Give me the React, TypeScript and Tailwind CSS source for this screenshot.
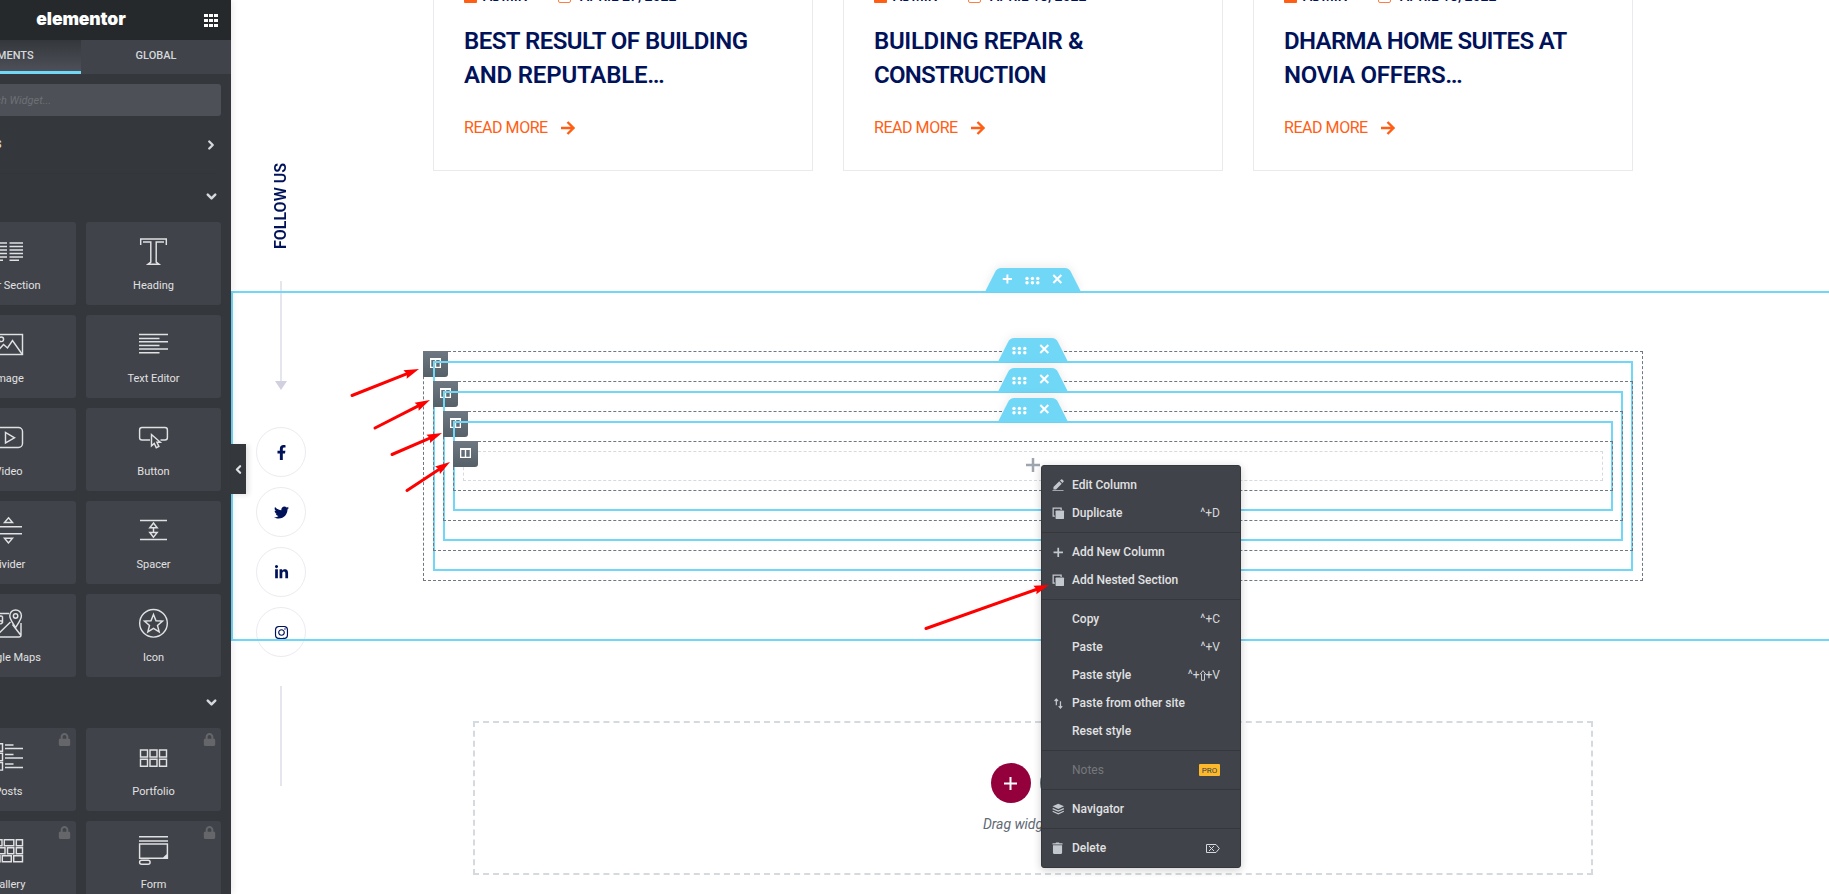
import React from 'react';
import { FaFacebookF, FaTwitter, FaLinkedinIn, FaInstagram, FaLock } from 'react-icons/fa';
import { ChevronDown, ChevronLeft, ChevronRight } from 'lucide-react';

type Widget = { label: string; locked?: boolean; art: React.ReactNode };

const basicWidgets: Widget[] = [
  {
    label: 'Inner Section',
    art: <path d="M0 5.9h13M0 9.4h13M0 12.9h13M0 16.4h13M0 19.9h13M0 23.2h9M15.500 5.9h13.500M15.500 9.4h13.500M15.500 12.9h13.500M15.500 16.4h13.500M15.500 19.9h13.500M15.500 23.2h9.500" />,
  },
  {
    label: 'Heading',
    art: <path d="M1.7 8V2h25.6v6M4 5h7.800v20.2L9 27.300h11l-2.800-2.100V5H25" />,
  },
  {
    label: 'Image',
    art: (
      <>
        <rect x="0.5" y="4.5" width="28" height="20" />
        <circle cx="7.3" cy="9.3" r="2.3" />
        <path d="M1 24l8.5-9.5 4 3.5 5-7.5L28 24" />
      </>
    ),
  },
  { label: 'Text Editor', art: <path d="M0 4.5h29M0 8.5h20.5M0 11.8h29M0 15.5h20.5M0 19h29M0 22.7h20.5" /> },
  {
    label: 'Video',
    art: (
      <>
        <rect x="0.5" y="4.5" width="28" height="20" rx="4" />
        <path d="M11.5 9.5v10.5l9-5.2z" />
      </>
    ),
  },
  {
    label: 'Button',
    art: (
      <>
        <path d="M11 17H3Q0.6 17 0.6 14.500V7Q0.6 4.500 3 4.500h23Q28.400 4.500 28.400 7v7.500Q28.400 17 26 17h-4.500" />
        <path d="M12.500 11.500v11.300l2.800-2.400 2 4.300 2.600-1.200-2-4.200h3.400z" />
      </>
    ),
  },
  { label: 'Divider', art: <path d="M1 10.700h27M1 17.700h27M14.500 1.800l4 4.700h-8zM14.500 27l-4-4.700h8z" /> },
  { label: 'Spacer', art: <path d="M1 4.500h27M1 23.500h27M14.500 7l3.700 4.700h-7.400zM14.500 21.200l-3.700-4.700h7.400zM14.500 11.700v4.800" /> },
  {
    label: 'Google Maps',
    art: (
      <>
        <path d="M15 4.500H3Q1 4.500 1 6.500v19.500Q1 28 3 28h22Q27 28 27 26V14M1.500 27.500L16.500 13M18.500 15.500L27 26.500" />
        <path d="M21.600 18.500C19 14 15.800 10.500 15.800 6.700a5.800 5.800 0 0 1 11.600 0C27.400 10.500 24.200 14 21.600 18.500z" />
        <circle cx="21.600" cy="7" r="2.200" />
        <path d="M8.500 7.500a2.500 2.500 0 1 0 .4 3.500M8.500 7.500v6q-2 2.500-4 .5" />
      </>
    ),
  },
  {
    label: 'Icon',
    art: (
      <>
        <circle cx="14.500" cy="14.300" r="13.800" />
        <path d="M14.500 5.500l2.500 6.200 6.500.4-5 4.300 1.700 6.500-5.700-3.600-5.700 3.600 1.700-6.500-5-4.300 6.500-.4z" />
      </>
    ),
  },
];

const proWidgets: Widget[] = [
  {
    label: 'Posts',
    locked: true,
    art: (
      <>
        <path d="M1 .8h7.500v7.500H1zM1 10.300h7.500v7.500H1zM1 19.600h7.500v7.500H1z" />
        <path d="M11 2h8.500M11 5.500h18M11 11.500h8.500M11 15h18M11 21h8.500M11 24.500h18" />
      </>
    ),
  },
  {
    label: 'Portfolio',
    locked: true,
    art: <path d="M1.500 7h7v7h-7zM11 7h7v7h-7zM20.500 7h7v7h-7zM1.500 16.300h7v7h-7zM11 16.300h7v7h-7zM20.500 16.300h7v7h-7z" />,
  },
  {
    label: 'Gallery',
    locked: true,
    art: (
      <path d="M1 3.800h7v6H1zM10.300 3.800h9.500v6h-9.500zM22.300 3.800h6.200v6h-6.200zM1 11.800h10v6H1zM13.500 11.800h6.300v6h-6.300zM22.300 11.800h6.200v6h-6.200zM1 19.800h5v6H1zM8.300 19.800h9v6h-9zM19.700 19.800h8.800v6h-8.800z" />
    ),
  },
  {
    label: 'Form',
    locked: true,
    art: (
      <>
        <path d="M0 .8h29M0 5h29" />
        <path d="M.6 8h27.800v14.300H.6zM24.500 22l3.800-3.500M26.300 22l2-2" />
        <rect x="0.600" y="24.300" width="10.500" height="4" rx="2" />
      </>
    ),
  },
];

function WidgetCard({ label, locked, art }: Widget) {
  return (
    <div className="relative flex h-[83px] flex-col items-center rounded-[3px] bg-[#404349] pt-[15px]">
      {locked && <FaLock className="absolute right-[5px] top-[5px] h-[13px] w-[13px] text-[#64666a]" />}
      <svg width="29" height="29" viewBox="0 0 29 29" fill="none" stroke="#e0e1e3" strokeWidth="1.450" className="overflow-visible">
        {art}
      </svg>
      <span className="mt-[12px] whitespace-nowrap text-[11px] leading-[16px] text-[#e0e1e3]">{label}</span>
    </div>
  );
}

function Sidebar() {
  return (
    <aside className="relative z-20 h-full w-[231px] shrink-0 bg-[#34383c] shadow-[0_0_8px_rgba(0,0,0,0.12)]">
      <div className="flex h-full justify-end overflow-hidden">
        <div className="w-[300px] shrink-0">
          <header className="grid h-[40px] grid-cols-[50px_200px_50px] items-center bg-[#26292c]">
            <span />
            <span className="pb-[3px] text-center font-['Inter'] text-[17.500px] font-black leading-[20px] tracking-[-0.1px] text-white">elementor</span>
            <svg width="14" height="13" viewBox="0 0 14 13" fill="#fff" className="ml-[23px]">
              <path d="M0 0h4v3H0zM5 0h4v3H5zM10 0h4v3h-4zM0 5h4v3H0zM5 5h4v3H5zM10 5h4v3h-4zM0 10h4v3H0zM5 10h4v3H5zM10 10h4v3h-4z" />
            </svg>
          </header>
          <nav className="grid h-[34px] grid-cols-2 text-center text-[11px] font-medium leading-[31px] text-[#d5d8dc]">
            <span className="border-b-[3px] border-[#71d7f7] bg-linear-to-b from-[#34383c] to-[#4d5058]">ELEMENTS</span>
            <span className="bg-[#404349]">GLOBAL</span>
          </nav>
          <div className="px-[10px] pt-[10px]">
            <div className="h-[32px] rounded-[3px] bg-[#4d5057] pl-[33px] text-[11px] italic leading-[33px] text-[#6d7075]">Search Widget...</div>
          </div>
          <div className="mx-[15px] flex h-[58px] items-center justify-between border-b border-[#323539] text-[11px] font-bold text-[#d5d8dc]">
            <span className="-ml-px pt-[2px]">FAVORITES</span>
            <ChevronRight className="-mr-[2px] h-[14px] w-[14px]" strokeWidth={4} />
          </div>
          <div className="mx-[12px] mb-[4px] flex h-[44px] items-center justify-end text-[#d5d8dc]">
            <ChevronDown className="h-[15px] w-[15px]" strokeWidth={4} />
          </div>
          <div className="grid grid-cols-2 gap-[10px] px-[10px]">
            {basicWidgets.map((w) => (
              <WidgetCard key={w.label} {...w} />
            ))}
          </div>
          <div className="mx-[12px] flex h-[51px] items-center justify-end text-[#d5d8dc]">
            <ChevronDown className="h-[15px] w-[15px]" strokeWidth={4} />
          </div>
          <div className="grid grid-cols-2 gap-[10px] px-[10px]">
            {proWidgets.map((w) => (
              <WidgetCard key={w.label} {...w} />
            ))}
          </div>
        </div>
      </div>
      <button className="absolute left-full top-[444px] flex h-[50px] w-[15px] items-center justify-center bg-[#34383c] text-[#e0e1e3] shadow-[3px_1px_5px_rgba(0,0,0,0.1)]">
        <ChevronLeft className="h-[13px] w-[13px] shrink-0" strokeWidth={4} />
      </button>
    </aside>
  );
}

type Post = { date: string; lines: { text: string; style: string }[] };

const posts: Post[] = [
  {
    date: 'APRIL 27, 2022',
    lines: [
      { text: 'BEST RESULT OF BUILDING', style: 'tracking-[-0.520px]' },
      { text: 'AND REPUTABLE…', style: 'tracking-[-0.200px]' },
    ],
  },
  {
    date: 'APRIL 18, 2022',
    lines: [
      { text: 'BUILDING REPAIR &', style: 'tracking-[-0.320px]' },
      { text: 'CONSTRUCTION', style: 'tracking-[-0.700px]' },
    ],
  },
  {
    date: 'APRIL 18, 2022',
    lines: [
      { text: 'DHARMA HOME SUITES AT', style: 'tracking-[-0.660px]' },
      { text: 'NOVIA OFFERS…', style: 'tracking-[-0.250px]' },
    ],
  },
];

function PostCard({ date, lines }: Post) {
  return (
    <article className="flex h-[171px] w-[380px] flex-col border border-t-0 border-[#e9e9ee] pl-[30px]">
      <div className="-mt-[12px] flex h-[16px] items-center text-[14px] font-medium leading-[16px] text-[#00125a]">
        <span className="mr-[6px] h-[14px] w-[13px] rounded-[1px] bg-[#ff5e14]" />
        <span className="w-[75px]">ADMIN</span>
        <span className="mr-[9px] h-[14px] w-[13px] rounded-[2px] border-[1.500px] border-[#ff7d42]" />
        <span className="whitespace-nowrap">{date}</span>
      </div>
      <h3 className="mt-[20px] font-['Roboto'] text-[24px] font-semibold leading-[34px] text-[#00125a]">
        {lines.map((l) => (
          <span key={l.text} className={'block whitespace-nowrap ' + l.style}>
            {l.text}
          </span>
        ))}
      </h3>
      <a className="mt-[26px] flex items-center text-[16px] leading-[20px] text-[#ff5e14]">
        <span className="w-[97px] tracking-[-0.450px]">READ MORE</span>
        <svg width="14" height="14" viewBox="0 0 14 14" fill="none" stroke="#ff5e14" strokeWidth="2.400">
          <path d="M0 7h12M6.500 1l6 6-6 6" />
        </svg>
      </a>
    </article>
  );
}

function Tab({ withAdd }: { withAdd?: boolean }) {
  return (
    <div className="absolute -top-[23px] left-0 flex w-full justify-center">
      <div
        className={
          "relative flex h-[24px] before:absolute before:inset-y-0 before:left-0 before:w-2/3 before:-skew-x-[27deg] before:rounded-tl-[4px] before:bg-[#71d7f7] before:content-[''] after:absolute after:inset-y-0 after:right-0 after:w-2/3 after:skew-x-[27deg] after:rounded-tr-[4px] after:bg-[#71d7f7] after:content-[''] drop-shadow-[0_-2px_4px_rgba(0,0,0,0.07)] " +
          (withAdd ? 'w-[84px]' : 'w-[59px]')
        }
      >
        <div className={withAdd ? 'relative z-10 flex w-full items-center justify-center pr-[2px]' : 'relative z-10 flex w-full items-center justify-center pr-[2px]'}>
          {withAdd && (
            <svg width="25" height="24" viewBox="0 0 25 24" stroke="#fff" strokeWidth="1.900">
              <path d="M7.800 11h9.200M12.400 6.400v9.200" />
            </svg>
          )}
          <svg width="25" height="24" viewBox="0 0 25 24" fill="#fff">
            {[7, 12.400, 17.800].map((x) => (
              <React.Fragment key={x}>
                <circle cx={x} cy="10.400" r="1.700" />
                <circle cx={x} cy="14.800" r="1.700" />
              </React.Fragment>
            ))}
          </svg>
          <svg width="25" height="24" viewBox="0 0 25 24" stroke="#fff" strokeWidth="2">
            <path d="M8.300 7l8 8M16.300 7l-8 8" />
          </svg>
        </div>
      </div>
    </div>
  );
}

function Column({ children }: { children: React.ReactNode }) {
  return (
    <div className="relative p-[10px]">
      <div className="pointer-events-none absolute inset-0 border border-dashed border-[#6d7882]" />
      <div className="absolute left-0 top-0 flex h-[26px] w-[25px] rounded-br-[3px] bg-linear-to-b from-[#6d7882] to-[#556068] pl-[7px] pt-[7px]">
        <svg width="11" height="10" viewBox="0 0 11 10" fill="#fff">
          <path d="M0 0h11v10H0zM1.300 2v6.700h3.500V2zM6.200 2v6.700h3.500V2z" fillRule="evenodd" />
        </svg>
      </div>
      {children}
    </div>
  );
}

function InnerSection({ children }: { children: React.ReactNode }) {
  return (
    <div className="relative py-[20px]">
      <div className="pointer-events-none absolute inset-0 border-2 border-[#71d7f7]" />
      <Tab />
      {children}
    </div>
  );
}

function FollowBar() {
  return (
    <div className="absolute left-[25px] top-[163px] flex w-[50px] flex-col items-center">
      <span className="h-[87px] rotate-180 text-center text-[16px] font-semibold leading-[20px] text-[#00125a] [writing-mode:vertical-rl]">FOLLOW US</span>
      <span className="mt-[31px] h-[100px] w-[2px] bg-[#e5e5ed]" />
      <span className="h-[9px] w-[12px] bg-[#d0d0df] [clip-path:polygon(0_0,100%_0,50%_100%)]" />
      <div className="mt-[37px] flex flex-col gap-[10px] text-[#00125a]">
        {[FaFacebookF, FaTwitter, FaLinkedinIn, FaInstagram].map((Icon, i) => (
          <span key={i} className="flex h-[50px] w-[50px] items-center justify-center rounded-full border border-[#ebebf1]">
            <Icon className="h-[15px] w-[15px]" />
          </span>
        ))}
      </div>
      <span className="mt-[29px] h-[100px] w-[2px] bg-[#e5e5ed]" />
    </div>
  );
}

type Entry = { label: string; icon?: React.ReactNode; keys?: React.ReactNode; pro?: boolean };

const duplicate = (
  <>
    <path d="M3 9.500H1.200V1.200H9.500V3" fill="none" stroke="#c2c8ce" strokeWidth="1.300" />
    <rect x="3.700" y="3.700" width="8.800" height="8.800" rx="0.800" />
  </>
);

const menu: Entry[][] = [
  [
    {
      label: 'Edit Column',
      icon: (
        <>
          <path d="M1.500 11V8.300L7.500 2.300l2.600 2.600L4.200 11zM8.300 1.500L9.500.4q.6-.5 1.200 0l1.300 1.300q.5.600 0 1.200L10.900 4.100z" />
          <rect x="0.500" y="11.700" width="11.500" height="1" />
        </>
      ),
    },
    { label: 'Duplicate', icon: duplicate, keys: '^+D' },
  ],
  [
    { label: 'Add New Column', icon: <path d="M5.600 1.700h1.800v4h4v1.800h-4v4H5.600v-4h-4V5.700h4z" /> },
    { label: 'Add Nested Section', icon: duplicate },
  ],
  [
    { label: 'Copy', keys: '^+C' },
    { label: 'Paste', keys: '^+V' },
    {
      label: 'Paste style',
      keys: (
        <>
          ^+
          <svg width="6" height="11" viewBox="0 0 6 11" fill="none" stroke="currentColor" strokeWidth="0.900" className="overflow-visible">
            <path d="M3 .6L.3 4h1.200v6.300h3V4h1.200z" />
          </svg>
          +V
        </>
      ),
    },
    {
      label: 'Paste from other site',
      icon: <path d="M4.500 8.500V2.500M2.700 4.200L4.500 2.200l1.800 2M8.800 4.500v6.500M7 9.500l1.800 2 1.800-2" fill="none" stroke="#c2c8ce" strokeWidth="1.300" />,
    },
    { label: 'Reset style' },
  ],
  [{ label: 'Notes', pro: true }],
  [
    {
      label: 'Navigator',
      icon: (
        <>
          <path d="M6.500.8l6 2.700-6 2.700-6-2.700z" />
          <path d="M.7 5.900l5.800 2.600 5.800-2.600M.7 8.600l5.800 2.600 5.800-2.600" fill="none" stroke="#c2c8ce" strokeWidth="1.300" />
        </>
      ),
    },
  ],
  [
    {
      label: 'Delete',
      icon: <path d="M.5 1.200h3L4.300.4h2.900l.8.800h3v1.400H.5zM1 3.500h9.500v7.700q0 1.300-1.300 1.300H2.300Q1 12.500 1 11.200z" />,
      keys: (
        <svg width="14" height="9" viewBox="0 0 14 9" fill="none" stroke="currentColor">
          <path d="M.5.5h9.500l3.300 4-3.300 4H.5zM3 2l5 5M8 2L3 7" />
        </svg>
      ),
    },
  ],
];

function ContextMenu() {
  return (
    <div className="absolute left-[810px] top-[465px] w-[200px] rounded-[3px] border border-[#34383c] bg-[#404349] shadow-[0_2px_8px_rgba(0,0,0,0.2)]">
      {menu.map((group, i) => (
        <ul key={i} className="border-b border-[#34383c] py-[5px] last:border-b-0">
          {group.map((e) => (
            <li key={e.label} className="flex h-[28px] items-center pl-[10px] pr-[20px] text-[12px] leading-[28px]">
              <span className="flex w-[20px] items-center">
                {e.icon && (
                  <svg width="12.500" height="12.500" viewBox="0 0 13 13" fill="#c2c8ce">
                    {e.icon}
                  </svg>
                )}
              </span>
              <span className={e.pro ? 'flex-1 text-[#75787c]' : 'flex-1 font-medium text-[#e0e1e3]'}>{e.label}</span>
              {e.keys && <span className="flex items-center text-[#d5d8dc]">{e.keys}</span>}
              {e.pro && <span className="h-[12px] w-[21px] rounded-[1px] bg-[#fcb92c] text-center text-[8px] leading-[13px] text-[#404349]">PRO</span>}
            </li>
          ))}
        </ul>
      ))}
    </div>
  );
}

const arrows: [number, number, number, number][] = [
  [352, 395.500, 419, 369],
  [375, 428, 430, 400],
  [392, 454.500, 442, 433],
  [407, 490.500, 450, 462],
  [926, 628.500, 1049, 585],
];

function Arrows() {
  return (
    <svg width="1829" height="894" viewBox="0 0 1829 894" className="pointer-events-none absolute left-0 top-0 z-30" fill="#fe0000" stroke="#fe0000">
      {arrows.map(([x1, y1, x2, y2]) => {
        const len = Math.hypot(x2 - x1, y2 - y1);
        const angle = (Math.atan2(y2 - y1, x2 - x1) * 180) / Math.PI;
        return (
          <g key={x1} transform={`translate(${x1} ${y1}) rotate(${angle})`}>
            <path d={`M0 0H${len - 12}`} strokeWidth="3" strokeLinecap="round" />
            <path d={`M${len} 0l-15 -4.500l2 4.500l-2 4.500z`} stroke="none" />
          </g>
        );
      })}
    </svg>
  );
}

export default function App() {
  return (
    <div className="relative flex h-[894px] w-[1829px] overflow-hidden bg-white font-['Roboto',sans-serif]">
      <Sidebar />
      <main className="relative flex h-full min-w-0 flex-1 flex-col">
        <FollowBar />
        <div className="ml-[202px] flex gap-[30px]">
          {posts.map((p, i) => (
            <PostCard key={i} {...p} />
          ))}
        </div>
        <section className="relative mt-[120px] h-[350px] w-[1604px] shrink-0 border-2 border-[#71d7f7] px-[190px] pt-[58px]">
          <div className="absolute left-0 top-[-2px] w-full">
            <Tab withAdd />
          </div>
          <Column>
            <InnerSection>
              <Column>
                <InnerSection>
                  <Column>
                    <InnerSection>
                      <Column>
                        <div className="flex h-[30px] items-center justify-center border border-dashed border-[#d5dadf] pr-px">
                          <svg width="14" height="14" viewBox="0 0 14 14" stroke="#9da5ae" strokeWidth="2.500" className="-mt-[2px]">
                            <path d="M0 7h14M7 0v14" />
                          </svg>
                        </div>
                      </Column>
                    </InnerSection>
                  </Column>
                </InnerSection>
              </Column>
            </InnerSection>
          </Column>
        </section>
        <div className="ml-[242px] mt-[80px] flex h-[154px] w-[1120px] shrink-0 flex-col items-center border-2 border-dashed border-[#d5dadf] pt-[40px]">
          <div className="flex gap-[9px] pl-[5px]">
            <span className="flex h-[40px] w-[40px] items-center justify-center rounded-full bg-[#93003c] pr-px">
              <svg width="13" height="13" viewBox="0 0 13 13" stroke="#fff" strokeWidth="2">
                <path d="M0 6.500h13M6.500 0v13" />
              </svg>
            </span>
            <span className="h-[40px] w-[40px] rounded-full bg-[#6d7882]" />
          </div>
          <p className="ml-px mt-[11px] text-[14px] italic leading-[20px] tracking-[-0.050px] text-[#5f6a74]">Drag widget here</p>
        </div>
        <ContextMenu />
      </main>
      <Arrows />
    </div>
  );
}
